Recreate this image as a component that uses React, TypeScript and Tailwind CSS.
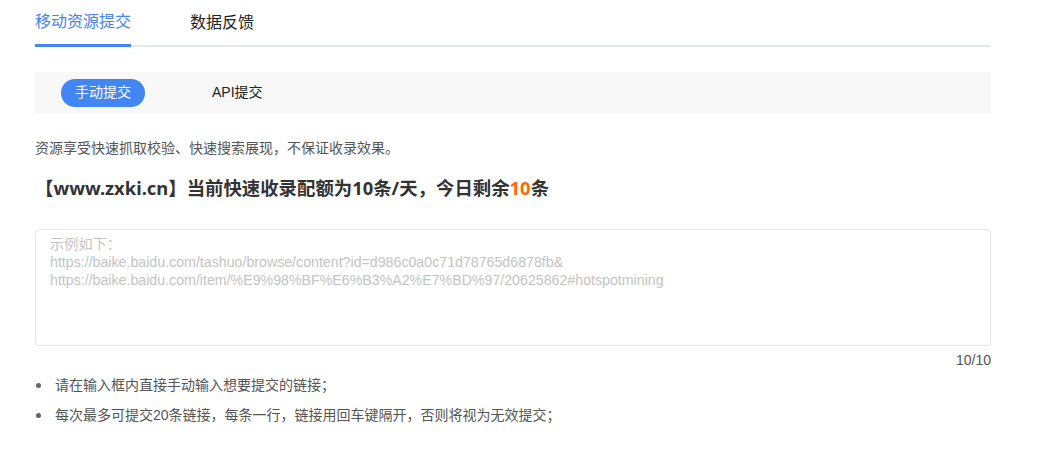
import React from "react";

const font = { fontFamily: '"Liberation Sans", "Noto Sans CJK SC", sans-serif' };
const headFont = { fontFamily: '"Noto Sans", "Noto Sans CJK SC", sans-serif' };

export default function App() {
  const placeholder =
    "示例如下：\nhttps://baike.baidu.com/tashuo/browse/content?id=d986c0a0c71d78765d6878fb&\nhttps://baike.baidu.com/item/%E9%98%BF%E6%B3%A2%E7%BD%97/20625862#hotspotmining";
  return (
    <div className="w-[1037px] h-[460px] bg-white" style={font}>
      <div className="ml-[35px] w-[956px]">
        {/* Tabs */}
        <div className="flex h-[47px] border-b-2 border-[#e4e8f0]">
          <div className="h-[47px] -mb-[2px] border-b-[3px] border-[#4285f4] flex items-center text-[16px] text-[#4285f4] leading-none">
            移动资源提交
          </div>
          <div className="ml-[59px] h-[45px] flex items-center text-[16px] text-[#222] leading-none">
            数据反馈
          </div>
        </div>

        {/* Sub tabs */}
        <div className="mt-[25px] h-[41px] bg-[#f8f8f8] flex items-center pl-[26px]">
          <div className="w-[84px] h-[28px] rounded-full bg-[#4285f4] text-white text-[14px] flex items-center justify-center">
            手动提交
          </div>
          <div className="ml-[67px] text-[14px] text-[#222]">API提交</div>
        </div>

        {/* Description */}
        <p className="mt-[25px] text-[14px] leading-[20px] text-[#555]">
          资源享受快速抓取校验、快速搜索展现，不保证收录效果。
        </p>

        <h2 className="mt-[17px] text-[18.4px] leading-[26px] font-bold text-[#333]" style={headFont}>
          【www.zxki.cn】当前快速收录配额为10条/天，今日剩余
          <span className="text-[#ff6a00]">10</span>条
        </h2>

        <textarea
          className="mt-[28px] block w-full h-[117px] border border-[#e5e5e5] rounded-[4px] pl-[14px] pr-[14px] pt-[5px] text-[14.2px] leading-[18px] text-[#333] placeholder:text-[#c4c4c4] resize-none outline-none"
          placeholder={placeholder}
          style={font}
        />

        <div className="mt-[5px] text-right text-[14px] leading-[18px] text-[#555]">10/10</div>

        <ul className="mt-[6px] flex flex-col gap-[10px]">
          <li className="flex items-center text-[14px] leading-[20px] text-[#555]">
            <span className="w-[5px] h-[5px] rounded-full bg-[#666] ml-[1px] mr-[14px]" />
            请在输入框内直接手动输入想要提交的链接；
          </li>
          <li className="flex items-center text-[14px] leading-[20px] text-[#555]">
            <span className="w-[5px] h-[5px] rounded-full bg-[#666] ml-[1px] mr-[14px]" />
            每次最多可提交20条链接，每条一行，链接用回车键隔开，否则将视为无效提交；
          </li>
        </ul>
      </div>
    </div>
  );
}
